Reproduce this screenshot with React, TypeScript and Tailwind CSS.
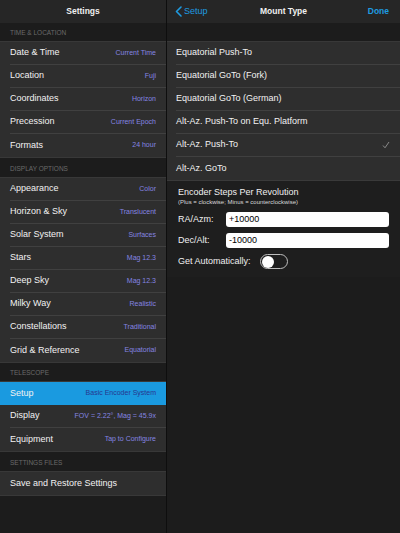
import React from "react";

type Row = { label: string; value?: string; selected?: boolean };

const sections: { title: string; h: string; rows: Row[] }[] = [
  {
    title: "TIME & LOCATION",
    h: "h-[18px]",
    rows: [
      { label: "Date & Time", value: "Current Time" },
      { label: "Location", value: "Fuji" },
      { label: "Coordinates", value: "Horizon" },
      { label: "Precession", value: "Current Epoch" },
      { label: "Formats", value: "24 hour" },
    ],
  },
  {
    title: "DISPLAY OPTIONS",
    h: "h-[19px]",
    rows: [
      { label: "Appearance", value: "Color" },
      { label: "Horizon & Sky", value: "Translucent" },
      { label: "Solar System", value: "Surfaces" },
      { label: "Stars", value: "Mag 12.3" },
      { label: "Deep Sky", value: "Mag 12.3" },
      { label: "Milky Way", value: "Realistic" },
      { label: "Constellations", value: "Traditional" },
      { label: "Grid & Reference", value: "Equatorial" },
    ],
  },
  {
    title: "TELESCOPE",
    h: "h-[18px]",
    rows: [
      { label: "Setup", value: "Basic Encoder System", selected: true },
      { label: "Display", value: "FOV = 2.22°, Mag = 45.9x" },
      { label: "Equipment", value: "Tap to Configure" },
    ],
  },
  {
    title: "SETTINGS FILES",
    h: "h-[19px]",
    rows: [{ label: "Save and Restore Settings" }],
  },
];

const mounts = [
  "Equatorial Push-To",
  "Equatorial GoTo (Fork)",
  "Equatorial GoTo (German)",
  "Alt-Az. Push-To on Equ. Platform",
  "Alt-Az. Push-To",
  "Alt-Az. GoTo",
];

export default function App() {
  return (
    <div
      className="w-[400px] h-[533px] flex bg-[#1c1c1c] text-white overflow-hidden"
      style={{ fontFamily: '"Liberation Sans", Arial, sans-serif' }}
    >
      {/* Left panel */}
      <div className="w-[166px] flex flex-col bg-[#1c1c1c]">
        <div className="h-[23px] flex items-center justify-center bg-[#262626] text-[8.5px] font-bold text-[#f0f0f0]">
          Settings
        </div>
        {sections.map((s) => (
          <div key={s.title} className="flex flex-col">
            <div className={`${s.h} flex items-end pb-[3px] pl-[10px] text-[6.5px] text-[#6a6a6a] bg-[#1c1c1c]`}>
              {s.title}
            </div>
            <div className="flex flex-col border-t border-b border-[#383838]">
              {s.rows.map((r, i) => (
                <div
                  key={r.label}
                  className={`h-[23px] flex ${r.selected ? "bg-[#1a9ae0]" : "bg-[#2e2e2e]"}`}
                >
                  <div
                    className={`flex-1 ml-[10px] pr-[10px] flex items-center justify-between ${
                      i < s.rows.length - 1 && !r.selected ? "border-b border-[#404040]" : ""
                    }`}
                  >
                    <span className="text-[9px] text-[#f2f2f2] whitespace-nowrap">{r.label}</span>
                    {r.value && (
                      <span
                        className={`text-[7px] whitespace-nowrap ${
                          r.selected ? "text-[#27388f]" : "text-[#8585e2]"
                        }`}
                      >
                        {r.value}
                      </span>
                    )}
                  </div>
                </div>
              ))}
            </div>
          </div>
        ))}
      </div>

      {/* Divider */}
      <div className="w-[1px] bg-[#0e0e0e]" />

      {/* Right panel */}
      <div className="flex-1 flex flex-col bg-[#1c1c1c]">
        <div className="h-[23px] flex items-center justify-between bg-[#262626] px-[8px]">
          <div className="flex items-center gap-[2px] text-[#1e9be0] text-[9px] w-[50px]">
            <svg width="7" height="11" viewBox="0 0 7 11">
              <path d="M6 1 L1.5 5.5 L6 10" stroke="#1e9be0" strokeWidth="1.6" fill="none" strokeLinecap="round" strokeLinejoin="round" />
            </svg>
            <span>Setup</span>
          </div>
          <div className="text-[8.5px] font-bold text-[#f0f0f0]">Mount Type</div>
          <div className="w-[50px] flex justify-end text-[8.5px] font-bold text-[#1e9be0] pr-[3px]">Done</div>
        </div>
        <div className="h-[18px] bg-[#1c1c1c]" />
        <div className="flex flex-col border-t border-[#383838]">
          {mounts.map((m, i) => (
            <div key={m} className="h-[23px] flex bg-[#2e2e2e]">
              <div
                className={`flex-1 ml-[9px] pr-[10px] flex items-center justify-between ${
                  i < mounts.length - 1 ? "border-b border-[#404040]" : ""
                }`}
              >
                <span className="text-[9px] text-[#f2f2f2] whitespace-nowrap">{m}</span>
                {m === "Alt-Az. Push-To" && (
                  <svg width="8" height="8" viewBox="0 0 8 8">
                    <path d="M1 4.5 L3 6.8 L7 1" stroke="#8a8a8a" strokeWidth="1" fill="none" />
                  </svg>
                )}
              </div>
            </div>
          ))}
        </div>
        <div className="border-t border-[#3a3a3a] bg-[#1e1e1e] flex flex-col pl-[11px] pr-[11px] pt-[5px] pb-[8px]">
          <div className="text-[9px] text-[#f0f0f0] leading-[12px]">Encoder Steps Per Revolution</div>
          <div className="text-[6px] text-[#d8d8d8] leading-[9px]">
            (Plus = clockwise; Minus = counterclockwise)
          </div>
          <div className="flex items-center mt-[5px] h-[15px]">
            <span className="w-[48px] text-[9px] text-[#f0f0f0]">RA/Azm:</span>
            <div className="flex-1 h-[15px] bg-white rounded-[3px] flex items-center pl-[3px] text-[9px] text-black">
              +10000
            </div>
          </div>
          <div className="flex items-center mt-[6px] h-[15px]">
            <span className="w-[48px] text-[9px] text-[#f0f0f0]">Dec/Alt:</span>
            <div className="flex-1 h-[15px] bg-white rounded-[3px] flex items-center pl-[3px] text-[9px] text-black">
              -10000
            </div>
          </div>
          <div className="flex items-center mt-[6px] gap-[9px]">
            <span className="text-[9px] text-[#f0f0f0]">Get Automatically:</span>
            <div className="w-[28px] h-[15px] rounded-full border border-[#bdbdbd] bg-[#1e1e1e] flex items-center pl-[1px]">
              <div className="w-[12px] h-[12px] rounded-full bg-white" />
            </div>
          </div>
        </div>
      </div>
    </div>
  );
}
